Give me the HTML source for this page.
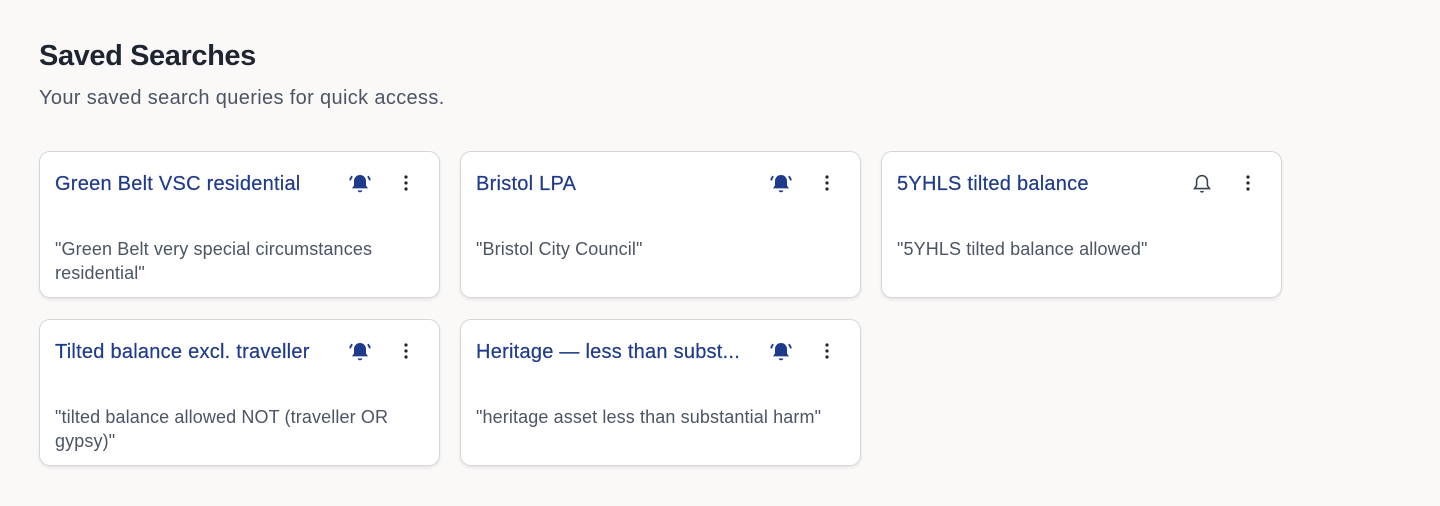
<!DOCTYPE html>
<html><head><style>
body{margin:0;background:#faf9f8;font-family:"Liberation Sans",sans-serif;width:1440px;height:506px;overflow:hidden}
h1{position:absolute;left:39px;top:40px;margin:0;font-size:29px;font-weight:bold;color:#1f2530;letter-spacing:-0.4px}
.sub{position:absolute;left:39px;top:87px;font-size:20px;color:#4b5563;letter-spacing:0.35px}
.card{position:absolute;width:401px;height:147px;background:#fff;border:1px solid #d6d6d9;border-radius:11px;box-shadow:0 2px 3px rgba(0,0,0,0.08);box-sizing:border-box}
.t{position:absolute;left:15px;top:21px;font-size:20px;color:#1e3a8a;white-space:nowrap;letter-spacing:0.25px;-webkit-text-stroke:0.2px #1e3a8a}
.q{position:absolute;left:15px;top:85px;width:360px;font-size:18px;line-height:24px;color:#4b5563;letter-spacing:0.12px}
.bell{position:absolute;left:308px;top:20px}
.dots{position:absolute;left:360px;top:22px}
</style></head><body>
<h1>Saved Searches</h1>
<div class="sub">Your saved search queries for quick access.</div>
<svg width="0" height="0" style="position:absolute"><defs>
<g id="bf"><path d="M10 2.5c-3 0-5 2.3-5 5.2v3.6L3.3 13.6h13.4L15 11.3V7.7c0-2.9-2-5.2-5-5.2z" fill="#1e3a8a"/><path d="M8.5 15.5q1.5 1.5 3 0" stroke="#1e3a8a" stroke-width="1.3" fill="none"/><path d="M3.5 3.5q-1.5 1.5-1.7 3.5M16.5 3.5q1.5 1.5 1.7 3.5" stroke="#1e3a8a" stroke-width="1.5" fill="none"/></g>
<g id="bo"><path d="M10 3c-2.7 0-4.5 2.1-4.5 4.8v3.5L3.8 13.8h12.4l-1.7-2.5V7.8C14.5 5.1 12.7 3 10 3z" fill="none" stroke="#374151" stroke-width="1.3"/><path d="M8.7 16q1.3 1.2 2.6 0" stroke="#374151" stroke-width="1.2" fill="none"/></g>
<g id="d"><circle cx="6" cy="3" r="1.6" fill="#1f2530"/><circle cx="6" cy="9" r="1.6" fill="#1f2530"/><circle cx="6" cy="15" r="1.6" fill="#1f2530"/></g>
</defs></svg>

<div class="card" style="left:39px;top:151px"><div class="t">Green Belt VSC residential</div><svg class="bell" width="24" height="24" viewBox="0 0 20 20"><use href="#bf"/></svg><svg class="dots" width="12" height="18"><use href="#d"/></svg><div class="q">"Green Belt very special circumstances residential"</div></div>
<div class="card" style="left:460px;top:151px"><div class="t">Bristol LPA</div><svg class="bell" width="24" height="24" viewBox="0 0 20 20"><use href="#bf"/></svg><svg class="dots" width="12" height="18"><use href="#d"/></svg><div class="q">"Bristol City Council"</div></div>
<div class="card" style="left:881px;top:151px"><div class="t">5YHLS tilted balance</div><svg class="bell" width="24" height="24" viewBox="0 0 20 20"><use href="#bo"/></svg><svg class="dots" width="12" height="18"><use href="#d"/></svg><div class="q">"5YHLS tilted balance allowed"</div></div>
<div class="card" style="left:39px;top:319px"><div class="t">Tilted balance excl. traveller</div><svg class="bell" width="24" height="24" viewBox="0 0 20 20"><use href="#bf"/></svg><svg class="dots" width="12" height="18"><use href="#d"/></svg><div class="q">"tilted balance allowed NOT (traveller OR gypsy)"</div></div>
<div class="card" style="left:460px;top:319px"><div class="t">Heritage — less than subst...</div><svg class="bell" width="24" height="24" viewBox="0 0 20 20"><use href="#bf"/></svg><svg class="dots" width="12" height="18"><use href="#d"/></svg><div class="q">"heritage asset less than substantial harm"</div></div>
</body></html>
